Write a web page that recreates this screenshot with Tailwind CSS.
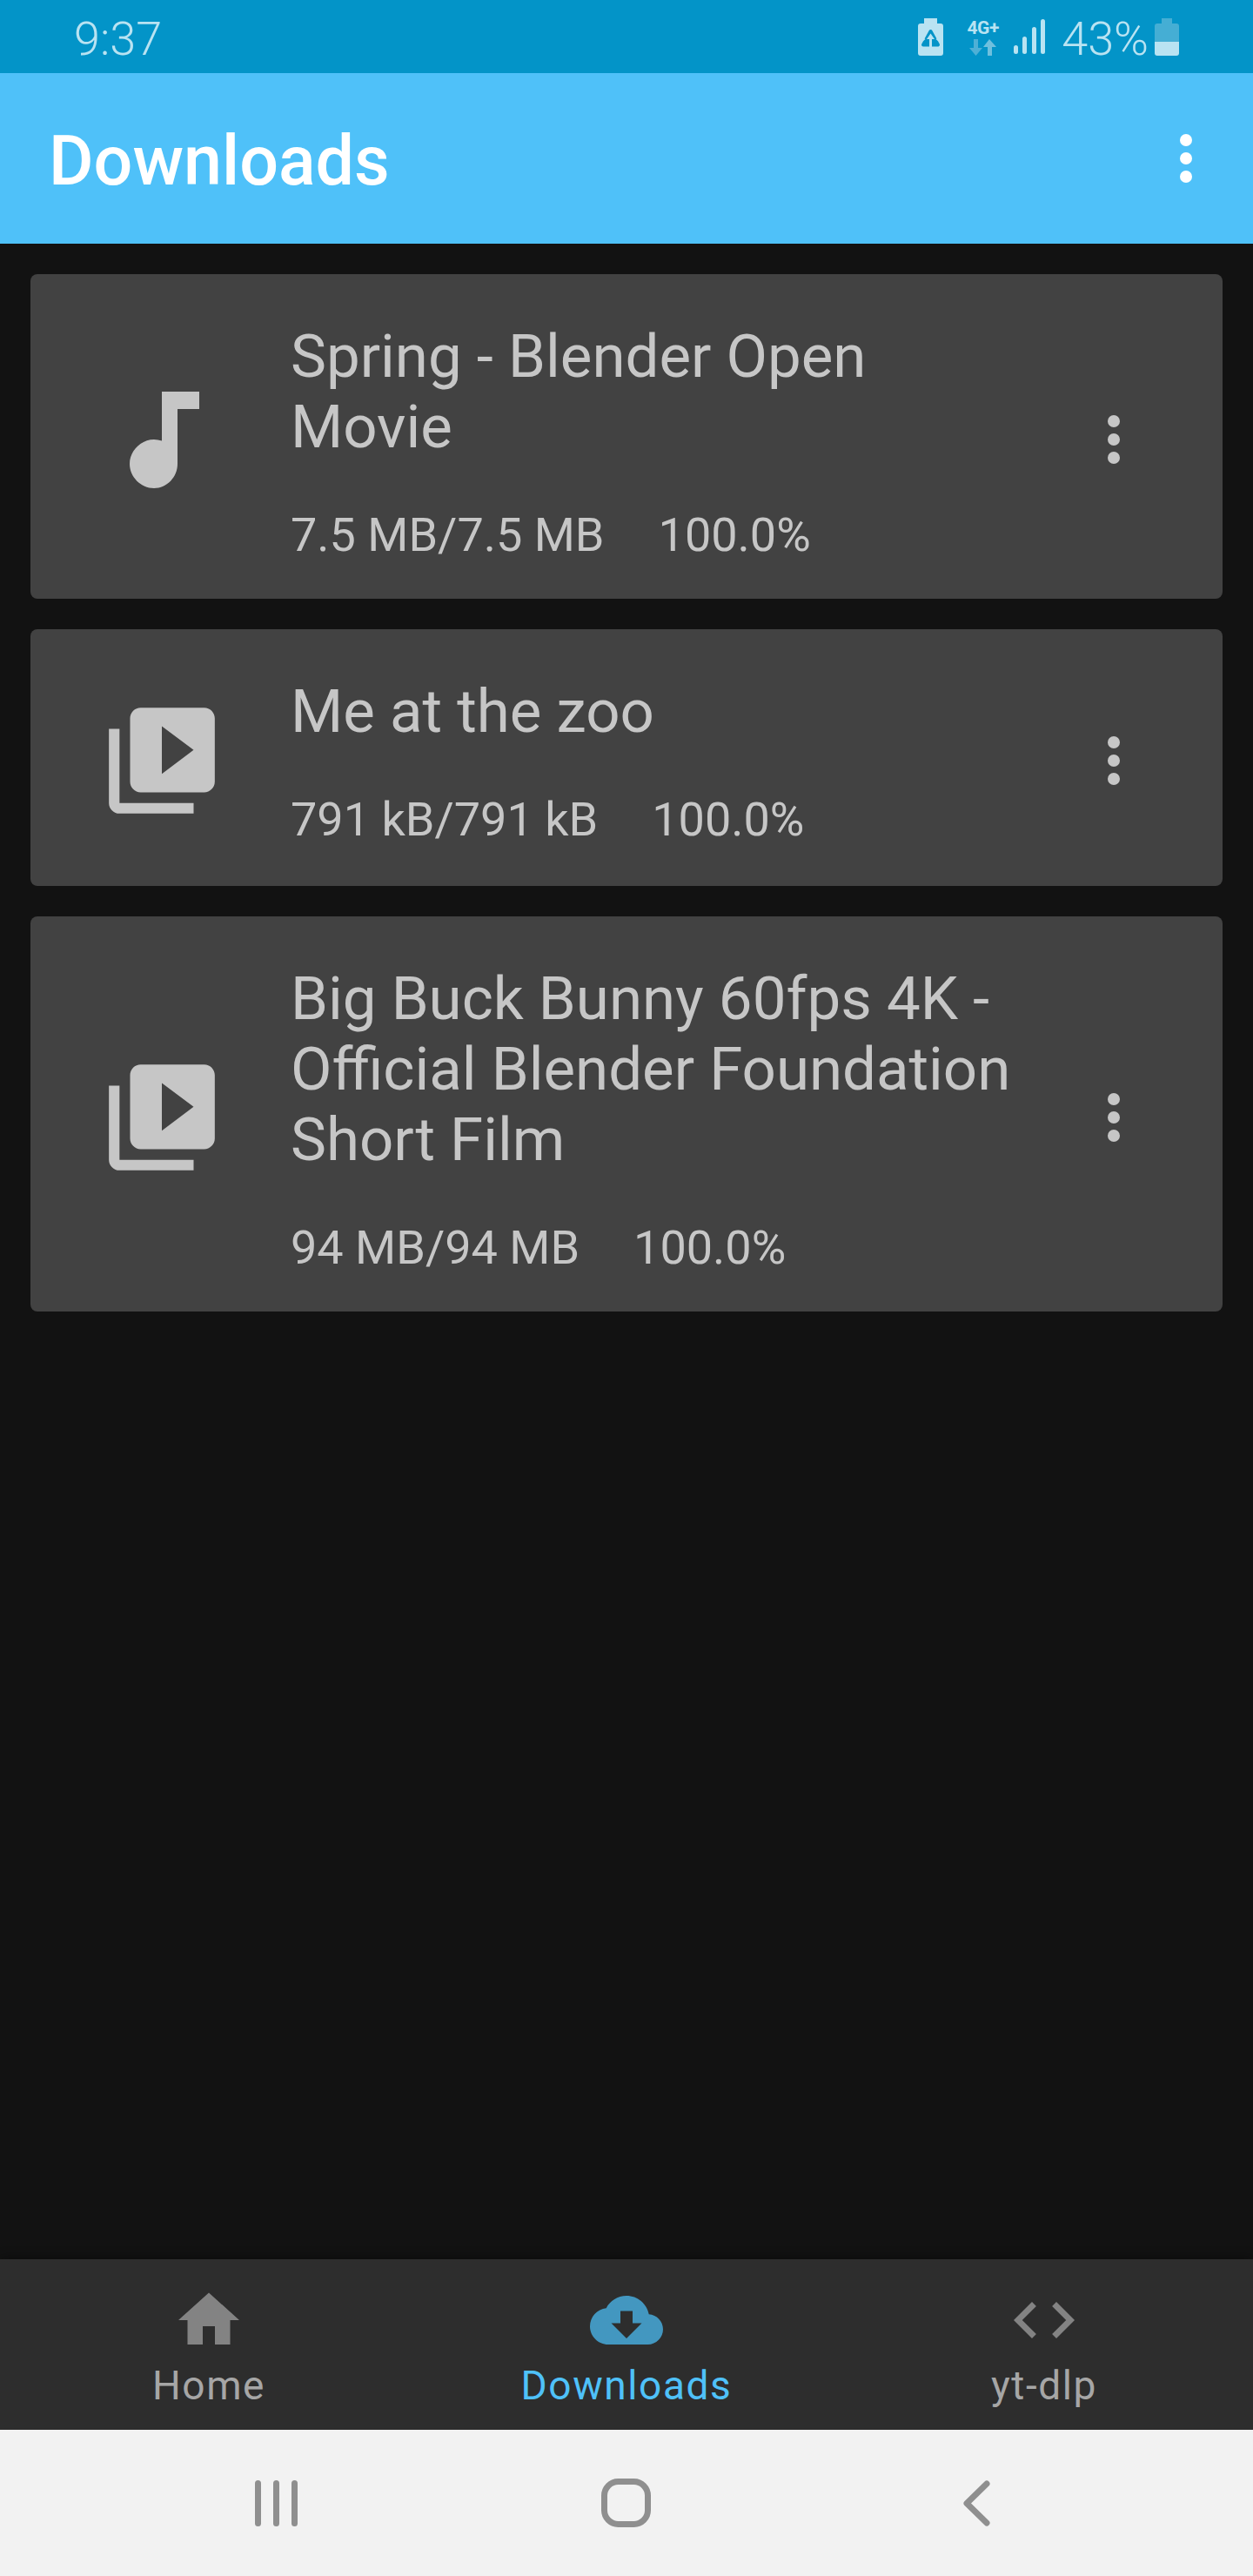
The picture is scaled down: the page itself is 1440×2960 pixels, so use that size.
<!DOCTYPE html>
<html lang="en">
  <head>
    <meta charset="UTF-8" />
    <meta name="viewport" content="width=device-width, initial-scale=1.0" />
    <title>Downloads</title>
    <script src="https://cdn.jsdelivr.net/npm/@tailwindcss/browser@4"></script>
  </head>
  <body class="bg-[#121212] font-['Roboto',sans-serif]">
    <div class="flex h-[2960px] w-[1440px] flex-col overflow-hidden">
      <!-- status bar -->
      <div class="flex h-[84px] shrink-0 items-center justify-between bg-[#0394c8] pl-[85px] pr-[85px] text-[#b9e3f2]">
        <div class="pt-[5px] text-[54px] font-light leading-[84px]">9:37</div>
        <div class="flex items-center">
          <svg class="h-[43px] w-[29px]" viewBox="0 0 29 43">
            <path fill="#b9e3f2" d="M7 0h15v6h4a3 3 0 0 1 3 3v31a3 3 0 0 1-3 3H3a3 3 0 0 1-3-3V9a3 3 0 0 1 3-3h4z" />
            <path fill="#0394c8" stroke="#0394c8" stroke-width="4" stroke-linejoin="round" d="M14.500 15L23 30.500H6z" />
            <path fill="#b9e3f2" d="M14.500 17.500l4.500 6.500h-3v9h-3v-9h-3z" />
            <path fill="#b9e3f2" d="M5 22l3.500 2-2.500 2zM24 22l-3.500 2 2.500 2z" />
          </svg>
          <div class="ml-[25px] flex w-[41px] flex-col items-center">
            <div class="text-[21px] font-bold leading-[22px] tracking-[-0.5px]">4G+</div>
            <svg class="mt-[2px] h-[19px] w-[31px]" viewBox="0 0 31 19">
              <path fill="#4eb0d6" d="M5 0h5v10h5l-7.500 9L0 10h5z" />
              <path fill="#6fc0de" d="M23 0l8 9h-5v10h-5V9h-5z" />
            </svg>
          </div>
          <svg class="ml-[15px] h-[40px] w-[36px]" viewBox="0 0 36 40" fill="#b9e3f2">
            <rect x="0" y="30" width="5" height="10" rx="2.500" />
            <rect x="10" y="20" width="5" height="20" rx="2.500" />
            <rect x="21" y="9" width="5" height="31" rx="2.500" />
            <rect x="31" y="0" width="5" height="40" rx="2.500" />
          </svg>
          <div class="ml-[19px] pt-[5px] text-[54px] font-light leading-[84px]">43%</div>
          <svg class="ml-[7px] h-[43px] w-[28px]" viewBox="0 0 28 43">
            <path fill="#45aed4" d="M8 0h12v6h5a3 3 0 0 1 3 3v18H0V9a3 3 0 0 1 3-3h5z" />
            <path fill="#b9e3f2" d="M0 27h28v13a3 3 0 0 1-3 3H3a3 3 0 0 1-3-3z" />
          </svg>
        </div>
      </div>

      <!-- app bar -->
      <div class="flex h-[196px] shrink-0 items-center justify-between bg-[#4fc1f9] pl-[56px] pr-[35px]">
        <div class="pt-[6px] text-[79px] font-medium leading-none text-white">Downloads</div>
        <svg class="h-[84px] w-[84px]" viewBox="0 0 24 24" fill="#ffffff">
          <circle cx="12" cy="6" r="2" />
          <circle cx="12" cy="12" r="2" />
          <circle cx="12" cy="18" r="2" />
        </svg>
      </div>

      <!-- download list -->
      <div class="flex flex-1 flex-col gap-[35px] px-[35px] pt-[35px]">
        <div class="flex items-center rounded-[8px] bg-[#424242] pl-[78px] text-[#c6c6c6]">
          <div class="flex w-[146px] shrink-0 justify-center pl-[6px] pt-[7px]">
            <svg class="h-[111px] w-[80px]" viewBox="0 0 80 111" fill="#c6c6c6">
              <path d="M37 0h43v20H55v63c0 15-12 28-27 28S0 98 0 83s13-28 28-28c3 0 6 .500 9 1.500z" />
            </svg>
          </div>
          <div class="ml-[75px] w-[830px] pb-[43px] pt-[54px]">
            <div class="text-[69px] leading-[81px]">Spring - Blender Open Movie</div>
            <div class="mt-[54px] flex gap-[62px] text-[54px] leading-[60px]">
              <span>7.5 MB/7.5 MB</span><span>100.0%</span>
            </div>
          </div>
          <div class="flex flex-1 justify-start pt-[7px]">
            <svg class="ml-[74px] h-[84px] w-[84px]" viewBox="0 0 24 24" fill="#c6c6c6">
              <circle cx="12" cy="6" r="2" />
              <circle cx="12" cy="12" r="2" />
              <circle cx="12" cy="18" r="2" />
            </svg>
          </div>
        </div>

        <div class="flex items-center rounded-[8px] bg-[#424242] pl-[78px] text-[#c6c6c6]">
          <div class="flex w-[146px] shrink-0 justify-center pt-[7px]">
            <svg class="h-[146px] w-[146px]" viewBox="0 0 24 24" fill="#c6c6c6">
              <path d="M4 6H2v14c0 1.100.900 2 2 2h14v-2H4V6zm16-4H8c-1.100 0-2 .900-2 2v12c0 1.100.900 2 2 2h12c1.100 0 2-.900 2-2V4c0-1.100-.900-2-2-2zm-8 12.500v-9l6 4.500-6 4.500z" />
            </svg>
          </div>
          <div class="ml-[75px] w-[830px] pb-[46px] pt-[54px]">
            <div class="text-[69px] leading-[81px]">Me at the zoo</div>
            <div class="mt-[54px] flex gap-[62px] text-[54px] leading-[60px]">
              <span>791 kB/791 kB</span><span>100.0%</span>
            </div>
          </div>
          <div class="flex flex-1 justify-start pt-[7px]">
            <svg class="ml-[74px] h-[84px] w-[84px]" viewBox="0 0 24 24" fill="#c6c6c6">
              <circle cx="12" cy="6" r="2" />
              <circle cx="12" cy="12" r="2" />
              <circle cx="12" cy="18" r="2" />
            </svg>
          </div>
        </div>

        <div class="flex items-center rounded-[8px] bg-[#424242] pl-[78px] text-[#c6c6c6]">
          <div class="flex w-[146px] shrink-0 justify-center pt-[7px]">
            <svg class="h-[146px] w-[146px]" viewBox="0 0 24 24" fill="#c6c6c6">
              <path d="M4 6H2v14c0 1.100.900 2 2 2h14v-2H4V6zm16-4H8c-1.100 0-2 .900-2 2v12c0 1.100.900 2 2 2h12c1.100 0 2-.900 2-2V4c0-1.100-.900-2-2-2zm-8 12.500v-9l6 4.500-6 4.500z" />
            </svg>
          </div>
          <div class="ml-[75px] w-[830px] pb-[43px] pt-[54px]">
            <div class="text-[69px] leading-[81px]">Big Buck Bunny 60fps 4K - Official Blender Foundation Short Film</div>
            <div class="mt-[54px] flex gap-[62px] text-[54px] leading-[60px]">
              <span>94 MB/94 MB</span><span>100.0%</span>
            </div>
          </div>
          <div class="flex flex-1 justify-start pt-[7px]">
            <svg class="ml-[74px] h-[84px] w-[84px]" viewBox="0 0 24 24" fill="#c6c6c6">
              <circle cx="12" cy="6" r="2" />
              <circle cx="12" cy="12" r="2" />
              <circle cx="12" cy="18" r="2" />
            </svg>
          </div>
        </div>
      </div>

      <!-- bottom navigation -->
      <div class="grid h-[196px] shrink-0 grid-cols-3 bg-[#2d2d2d] shadow-[0_-4px_10px_rgba(0,0,0,0.25)]">
        <div class="flex flex-col items-center pt-[28px] text-[#a6a6a6]">
          <svg class="h-[84px] w-[84px]" viewBox="0 0 24 24" fill="#838383">
            <path d="M10 20v-6h4v6h5v-8h3L12 3 2 12h3v8z" />
          </svg>
          <div class="mt-[5px] text-[46px] leading-[56px] tracking-[1.600px]">Home</div>
        </div>
        <div class="flex flex-col items-center pt-[28px] text-[#4fc1f9]">
          <svg class="h-[84px] w-[84px]" viewBox="0 0 24 24" fill="#4397c0">
            <path d="M19.350 10.040C18.670 6.590 15.640 4 12 4 9.110 4 6.600 5.640 5.350 8.040 2.340 8.360 0 10.910 0 14c0 3.310 2.690 6 6 6h13c2.760 0 5-2.240 5-5 0-2.640-2.050-4.780-4.650-4.960zM17 13l-5 5-5-5h3V9h4v4h3z" />
          </svg>
          <div class="mt-[5px] text-[46px] leading-[56px] tracking-[1.600px]">Downloads</div>
        </div>
        <div class="flex flex-col items-center pt-[28px] text-[#a6a6a6]">
          <svg class="h-[84px] w-[84px]" viewBox="0 0 24 24" fill="#838383">
            <path d="M9.400 16.600L4.800 12l4.600-4.600L8 6l-6 6 6 6 1.400-1.400zm5.200 0l4.600-4.600-4.600-4.600L16 6l6 6-6 6-1.400-1.400z" />
          </svg>
          <div class="mt-[5px] text-[46px] leading-[56px] tracking-[1.600px]">yt-dlp</div>
        </div>
      </div>

      <!-- system navigation -->
      <div class="flex h-[168px] shrink-0 items-center bg-[#f2f2f2] pl-[293px]">
        <svg class="h-[53px] w-[49px]" viewBox="0 0 49 53" fill="#8f8f8f">
          <rect x="0" y="0" width="7" height="53" rx="3.500" />
          <rect x="21" y="0" width="7" height="53" rx="3.500" />
          <rect x="42" y="0" width="7" height="53" rx="3.500" />
        </svg>
        <svg class="ml-[349px] h-[56px] w-[57px]" viewBox="0 0 57 56" fill="none" stroke="#8f8f8f" stroke-width="7">
          <rect x="3.500" y="3.500" width="50" height="49" rx="16" />
        </svg>
        <svg class="ml-[358px] h-[53px] w-[33px]" viewBox="0 0 33 53" fill="none" stroke="#8f8f8f" stroke-width="7" stroke-linecap="round" stroke-linejoin="round">
          <path d="M28 4L5 26.500 28 49" />
        </svg>
      </div>
    </div>
  </body>
</html>
